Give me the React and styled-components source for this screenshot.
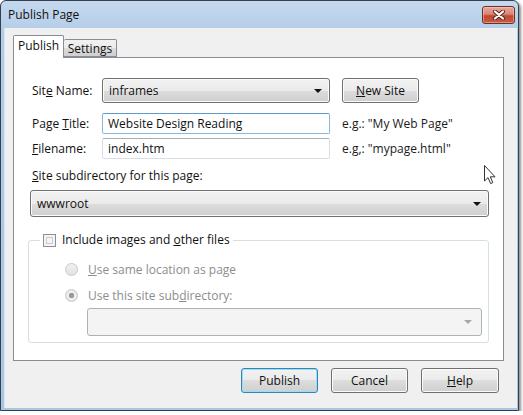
import React from "react";
import styled, { createGlobalStyle } from "styled-components";

const GlobalStyle = createGlobalStyle`
  body {
    margin: 0;
    background: #ffffff;
    font-family: "Segoe UI", "Open Sans", "Noto Sans", sans-serif;
    font-size: 12px;
    color: #111;
  }
  * { box-sizing: border-box; }
`;

function Arrow({ disabled }) {
  return (
    <svg width="8" height="4" viewBox="0 0 8 4">
      <path d="M0 0 H8 L4 4 Z" fill={disabled ? "#a7a7a7" : "#111"} />
    </svg>
  );
}

export default function App() {
  return (
    <>
      <GlobalStyle />
      <Window>
        <TitleBar>
          <Title>Publish Page</Title>
          <CloseButton>
            <svg width="14" height="10" viewBox="0 0 14 10">
              <path d="M3 1.5 L11 8.5 M11 1.5 L3 8.5" stroke="#5b2118" strokeWidth="4" strokeLinecap="round" />
              <path d="M3 1.5 L11 8.5 M11 1.5 L3 8.5" stroke="#ffffff" strokeWidth="2.2" strokeLinecap="round" />
            </svg>
          </CloseButton>
        </TitleBar>
        <Client>
          <TabStrip>
            <Tab $active>Publish</Tab>
            <Tab>Settings</Tab>
          </TabStrip>
          <Panel>
            <FormRow $mt={20}>
              <Label>Sit<u>e</u> Name:</Label>
              <Select $width={228} $height={25}>
                <span>inframes</span>
                <Arrow />
              </Select>
              <Button $width={77} $height={25} $ml={12}>
                <span><u>N</u>ew Site</span>
              </Button>
            </FormRow>
            <FormRow $mt={10}>
              <Label>Page <u>T</u>itle:</Label>
              <Input $focused>Website Design Reading</Input>
              <Hint>e.g.: "My Web Page"</Hint>
            </FormRow>
            <FormRow $mt={4}>
              <Label><u>F</u>ilename:</Label>
              <Input>index.htm</Input>
              <Hint>e.g,: "mypage.html"</Hint>
            </FormRow>
            <Section>
              <SectionLabel><u>S</u>ite subdirectory for this page:</SectionLabel>
              <Select $width={459} $height={27} $mt={6}>
                <span>wwwroot</span>
                <Arrow />
              </Select>
              <Group>
                <Legend>
                  <Checkbox />
                  <span>Include images and <u>o</u>ther files</span>
                </Legend>
                <RadioRow $mt={13}>
                  <Radio />
                  <span><u>U</u>se same location as page</span>
                </RadioRow>
                <RadioRow $mt={10}>
                  <Radio $checked />
                  <span>Use this site sub<u>d</u>irectory:</span>
                </RadioRow>
                <DisabledSelect>
                  <Arrow disabled />
                </DisabledSelect>
              </Group>
            </Section>
          </Panel>
          <ButtonBar>
            <Button $width={77} $height={25} $default>Publish</Button>
            <Button $width={77} $height={25}>Cancel</Button>
            <Button $width={78} $height={25}><span><u>H</u>elp</span></Button>
          </ButtonBar>
        </Client>
        <Cursor>
          <svg width="12" height="20" viewBox="0 0 12 20">
            <path
              d="M0.5 0.5 V16 L4 12.6 L6.6 18.6 L8.8 17.6 L6.3 11.8 H11 Z"
              fill="#ffffff"
              stroke="#333"
              strokeWidth="1"
              strokeLinejoin="round"
            />
          </svg>
        </Cursor>
      </Window>
    </>
  );
}

const Window = styled.div`
  position: relative;
  width: 519px;
  height: 411px;
  display: flex;
  flex-direction: column;
  padding: 0 1px 2px 3px;
  border: 1px solid #33404f;
  border-radius: 6px 6px 0 0;
  background: linear-gradient(to bottom, #c5d9ee 0%, #b2cce7 8%, #a9c6e4 100%);
  box-shadow: 2px 2px 3px rgba(0, 0, 0, 0.45);
`;

const TitleBar = styled.div`
  height: 27px;
  flex-shrink: 0;
  display: flex;
  align-items: center;
  justify-content: space-between;
  padding: 0 2px 0 4px;
`;

const Title = styled.span`
  font-size: 12px;
  color: #101010;
`;

const CloseButton = styled.div`
  width: 33px;
  height: 18px;
  display: flex;
  align-items: center;
  justify-content: center;
  border: 1px solid #6a2f26;
  border-radius: 3px;
  background: linear-gradient(to bottom, #e8a89c 0%, #d88676 45%, #c2482f 55%, #c75a42 100%);
  box-shadow: inset 0 0 0 1px rgba(255, 220, 210, 0.45);
`;

const Client = styled.div`
  flex: 1;
  display: flex;
  flex-direction: column;
  padding: 7px 13px 0 8px;
  background: #f0f0f0;
  border-left: 1px solid #d7e4f1;
`;

const TabStrip = styled.div`
  display: flex;
  align-items: flex-end;
  height: 22px;
  position: relative;
  z-index: 1;
`;

const Tab = styled.div`
  width: ${(p) => (p.$active ? "51px" : "53px")};
  height: ${(p) => (p.$active ? "23px" : "18px")};
  display: flex;
  align-items: center;
  justify-content: center;
  padding-bottom: ${(p) => (p.$active ? "3px" : "0")};
  border: 1px solid #898c95;
  border-bottom: ${(p) => (p.$active ? "none" : "1px solid #898c95")};
  border-left: ${(p) => (p.$active ? "1px solid #898c95" : "none")};
  border-radius: 2px 2px 0 0;
  margin-bottom: ${(p) => (p.$active ? "-1px" : "0")};
  background: ${(p) =>
    p.$active
      ? "#ffffff"
      : "linear-gradient(to bottom, #f2f2f2 0%, #ebebeb 50%, #dddddd 50%, #cfcfcf 100%)"};
  color: #111;
`;

const Panel = styled.div`
  height: 304px;
  display: flex;
  flex-direction: column;
  background: #ffffff;
  border: 1px solid #898c95;
`;

const FormRow = styled.div`
  display: flex;
  align-items: center;
  margin-top: ${(p) => p.$mt}px;
  padding-left: 18px;
`;

const Label = styled.label`
  width: 70px;
  flex-shrink: 0;
`;

const Select = styled.div`
  width: ${(p) => p.$width}px;
  height: ${(p) => p.$height}px;
  margin-top: ${(p) => p.$mt || 0}px;
  display: flex;
  align-items: center;
  justify-content: space-between;
  padding: 0 7px 0 6px;
  border: 1px solid #707070;
  border-radius: 3px;
  background: linear-gradient(to bottom, #f2f2f2 0%, #ebebeb 50%, #dddddd 50%, #cfcfcf 100%);
  box-shadow: inset 0 0 0 1px #fbfbfb;
`;

const DisabledSelect = styled.div`
  width: 395px;
  height: 28px;
  margin: 5px 0 0 58px;
  display: flex;
  align-items: center;
  justify-content: flex-end;
  padding: 0 9px;
  border: 1px solid #adb2b5;
  border-radius: 3px;
  background: #f4f4f4;
`;

const Button = styled.div`
  width: ${(p) => p.$width}px;
  height: ${(p) => p.$height}px;
  margin-left: ${(p) => p.$ml || 0}px;
  display: flex;
  align-items: center;
  justify-content: center;
  border: 1px solid ${(p) => (p.$default ? "#3c7fb1" : "#707070")};
  border-radius: 3px;
  background: linear-gradient(to bottom, #f2f2f2 0%, #ebebeb 50%, #dddddd 50%, #cfcfcf 100%);
  box-shadow: inset 0 0 0 1px ${(p) => (p.$default ? "#8ee3fb" : "#fbfbfb")};
  color: #111;
`;

const Input = styled.div`
  width: 228px;
  height: 21px;
  display: flex;
  align-items: center;
  padding-left: 5px;
  border: 1px solid ${(p) => (p.$focused ? "#89b8df" : "#d9dde4")};
  border-top-color: ${(p) => (p.$focused ? "#5b9bd0" : "#abadb3")};
  border-radius: 2px;
  background: #ffffff;
`;

const Hint = styled.span`
  margin-left: 12px;
  color: #1a1a1a;
`;

const Section = styled.div`
  display: flex;
  flex-direction: column;
  padding-left: 16px;
`;

const SectionLabel = styled.label`
  margin: 9px 0 0 2px;
  line-height: 16px;
`;

const Group = styled.fieldset`
  width: 461px;
  height: 111px;
  margin: 15px 0 0 -2px;
  padding: 0;
  border: 1px solid #d5dfe5;
  border-radius: 3px;
  min-width: 0;
`;

const Legend = styled.legend`
  display: flex;
  align-items: center;
  gap: 6px;
  margin-left: 11px;
  padding: 0 3px;
  line-height: 16px;
  color: #111;
`;

const Checkbox = styled.span`
  width: 13px;
  height: 13px;
  border: 1px solid #8e8f8f;
  background: #f4f4f4;
  box-shadow: inset 0 0 0 2px #f4f4f4, inset 0 0 0 3px #c9ccd1;
`;

const RadioRow = styled.div`
  display: flex;
  align-items: center;
  gap: 10px;
  height: 16px;
  margin: ${(p) => p.$mt}px 0 0 36px;
  color: #8d8d8d;
`;

const Radio = styled.span`
  width: 13px;
  height: 13px;
  border-radius: 50%;
  border: 1px solid #c9c9c9;
  background: ${(p) =>
    p.$checked
      ? "radial-gradient(circle, #9a9a9a 0 2.5px, #f0f0f0 3px 4px, #e6e6e6 4.5px)"
      : "linear-gradient(to bottom, #f1f1f1, #e2e2e2)"};
`;

const ButtonBar = styled.div`
  display: flex;
  justify-content: flex-end;
  gap: 13px;
  margin-top: 7px;
  padding-right: 5px;
`;

const Cursor = styled.div`
  position: absolute;
  left: 483px;
  top: 164px;
  line-height: 0;
`;
